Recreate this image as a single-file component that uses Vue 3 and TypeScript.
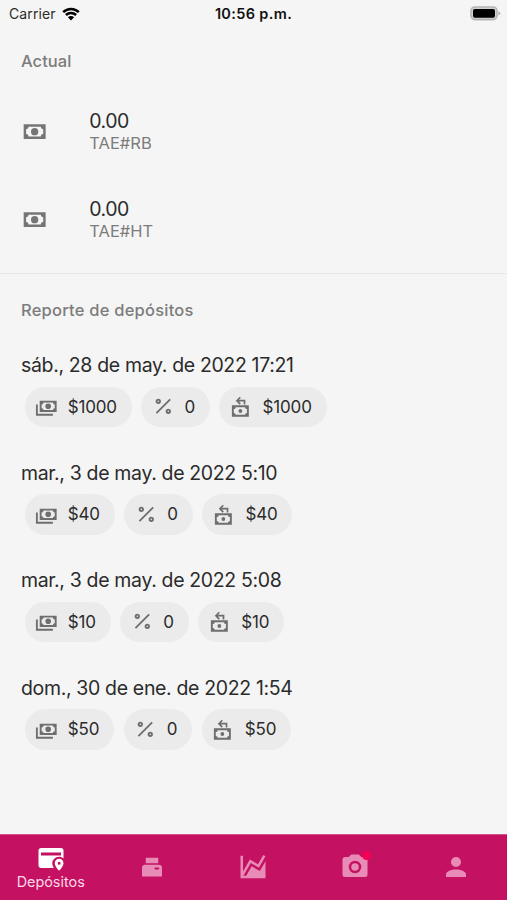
<script setup lang="ts">
interface Balance {
  amount: string
  account: string
}

interface Deposit {
  date: string
  amount: string
  commission: string
  total: string
}

const balances: Balance[] = [
  { amount: '0.00', account: 'TAE#RB' },
  { amount: '0.00', account: 'TAE#HT' },
]

const deposits: Deposit[] = [
  { date: 'sáb., 28 de may. de 2022 17:21', amount: '$1000', commission: '0', total: '$1000' },
  { date: 'mar., 3 de may. de 2022 5:10', amount: '$40', commission: '0', total: '$40' },
  { date: 'mar., 3 de may. de 2022 5:08', amount: '$10', commission: '0', total: '$10' },
  { date: 'dom., 30 de ene. de 2022 1:54', amount: '$50', commission: '0', total: '$50' },
]
</script>

<template>
  <div class="screen">
    <header class="status">
      <div class="carrier">
        <span>Carrier</span>
        <svg class="wifi" viewBox="0 0 18 14">
          <path d="M1.2 5.1A11.2 11.2 0 0 1 16.8 5.1" />
          <path d="M3.9 8A7.3 7.3 0 0 1 14.1 8" />
          <path class="dot" d="M5.9 10.2A4.4 4.4 0 0 1 12.1 10.2L9 13.4Z" />
        </svg>
      </div>
      <div class="clock">10:56 p.m.</div>
      <div class="power">
        <svg class="battery" viewBox="0 0 31 15">
          <rect class="shell" x="1" y="1" width="26" height="12.6" rx="4" />
          <rect x="3" y="3" width="22" height="8.8" rx="1.8" />
          <path class="tip" d="M28.3 5.2Q30.4 6 30.4 7.3T28.3 9.4Z" />
        </svg>
      </div>
    </header>

    <section class="current">
      <h2>Actual</h2>
      <div v-for="b in balances" :key="b.account" class="balance">
        <svg class="cash" viewBox="0 0 24 24">
          <path d="M3,6H21V18H3V6M12,9A3,3 0 0,1 15,12A3,3 0 0,1 12,15A3,3 0 0,1 9,12A3,3 0 0,1 12,9M7,8A2,2 0 0,1 5,10V14A2,2 0 0,1 7,16H17A2,2 0 0,1 19,14V10A2,2 0 0,1 17,8H7Z" />
        </svg>
        <div>
          <div class="amount">{{ b.amount }}</div>
          <div class="account">{{ b.account }}</div>
        </div>
      </div>
    </section>

    <section class="report">
      <h2>Reporte de depósitos</h2>
      <article v-for="d in deposits" :key="d.date" class="deposit">
        <div class="date">{{ d.date }}</div>
        <div class="chips">
          <div class="chip">
            <svg viewBox="0 0 24 24">
              <path d="M5,6H23V18H5V6M14,9A3,3 0 0,1 17,12A3,3 0 0,1 14,15A3,3 0 0,1 11,12A3,3 0 0,1 14,9M9,8A2,2 0 0,1 7,10V14A2,2 0 0,1 9,16H19A2,2 0 0,1 21,14V10A2,2 0 0,1 19,8H9M1,10H3V20H19V22H1V10Z" />
            </svg>
            <span>{{ d.amount }}</span>
          </div>
          <div class="chip">
            <svg class="line" viewBox="0 0 24 24">
              <path d="M4.7 19.3L19.3 4.7" />
              <circle cx="6.7" cy="6.7" r="1.8" />
              <circle cx="17.3" cy="17.3" r="1.8" />
            </svg>
            <span>{{ d.commission }}</span>
          </div>
          <div class="chip">
            <svg viewBox="0 0 24 24">
              <path class="arrow" d="M10.9 2.4L7.4 6L10.9 9.6M7.6 6H15.4V10.2" />
              <path d="M2 11H20V23H2ZM6 13A2 2 0 0 1 4 15V19A2 2 0 0 1 6 21H16A2 2 0 0 1 18 19V15A2 2 0 0 1 16 13Z" fill-rule="evenodd" />
              <circle cx="11" cy="17" r="2" />
            </svg>
            <span>{{ d.total }}</span>
          </div>
        </div>
      </article>
    </section>

    <nav class="tabs">
      <div class="tab active">
        <svg viewBox="0 0 24 24">
          <path d="M11.5,20H4C2.9,20 2,19.1 2,18V6C2,4.89 2.9,4 4,4H20A2,2 0 0,1 22,6V12.4C21,11.5 19.8,11 18.5,11C15.5,11 13,13.4 13,16.2C13,17.5 13.5,18.8 14.3,20ZM20,10V7.6H4V10H20ZM18.5,12.6C20.4,12.6 22,14.1 22,16.1C22,18.7 18.5,22 18.5,22S15,18.7 15,16.1C15,14.1 16.6,12.6 18.5,12.6M18.5,17.3A1.2,1.2 0 1,0 18.5,14.9A1.2,1.2 0 0,0 18.5,17.3Z" fill-rule="evenodd" />
        </svg>
        <span>Depósitos</span>
      </div>
      <div class="tab">
        <svg viewBox="0 0 24 24">
          <path d="M7 4.5H17V9H7ZM6.5 10.2H17.5A2.5 2.5 0 0 1 20 12.7V19.5H4V12.7A2.5 2.5 0 0 1 6.5 10.2ZM14.8 12.4A0.8 0.8 0 0 0 14.8 14H17A0.8 0.8 0 0 0 17 12.4Z" fill-rule="evenodd" />
        </svg>
      </div>
      <div class="tab">
        <svg viewBox="0 0 24 24">
          <path d="M17.45,15.18L22,7.31V21H2V3H4V15.54L9.5,6L16,9.78L20.24,2.45L21.97,3.45L16.74,12.5L10.23,8.75L4.31,19H6.57L10.96,11.44L17.45,15.18Z" />
        </svg>
      </div>
      <div class="tab">
        <div class="camera">
          <svg viewBox="0 0 24 24">
            <path d="M4,4H7L9,2H15L17,4H20A2,2 0 0,1 22,6V18A2,2 0 0,1 20,20H4A2,2 0 0,1 2,18V6A2,2 0 0,1 4,4M12,7A5,5 0 0,0 7,12A5,5 0 0,0 12,17A5,5 0 0,0 17,12A5,5 0 0,0 12,7M12,9A3,3 0 0,1 15,12A3,3 0 0,1 12,15A3,3 0 0,1 9,12A3,3 0 0,1 12,9Z" />
          </svg>
          <i class="badge"></i>
        </div>
      </div>
      <div class="tab">
        <svg viewBox="0 0 24 24">
          <path d="M12,4A4,4 0 0,1 16,8A4,4 0 0,1 12,12A4,4 0 0,1 8,8A4,4 0 0,1 12,4M12,14C16.42,14 20,15.79 20,18V20H4V18C4,15.79 7.58,14 12,14Z" />
        </svg>
      </div>
    </nav>
  </div>
</template>

<style>
body {
  background: #f5f5f5;
}
</style>

<style scoped>
.screen {
  width: 507px;
  height: 900px;
  display: flex;
  flex-direction: column;
  background: #f5f5f5;
  color: #2b2b2b;
  font-family: Inter, "Liberation Sans", sans-serif;
  white-space: nowrap;
  overflow: hidden;
}

.status {
  height: 28px;
  display: grid;
  grid-template-columns: 1fr auto 1fr;
  align-items: center;
}

.carrier {
  display: flex;
  align-items: center;
  gap: 6px;
  padding-left: 9px;
  font-size: 14px;
  letter-spacing: 0.1px;
  line-height: 28px;
}

.wifi {
  width: 18px;
  height: 14px;
  margin-bottom: 1px;
  fill: none;
  stroke: #000;
  stroke-width: 2.5;
}

.wifi .dot {
  fill: #000;
  stroke: none;
}

.clock {
  font-size: 14.5px;
  font-weight: 600;
  letter-spacing: 0.35px;
  line-height: 28px;
  color: #111;
}

.power {
  display: flex;
  justify-content: flex-end;
  padding: 0 6px 2px 0;
}

.battery {
  width: 31px;
  height: 15px;
}

.battery .shell {
  fill: #d2d2d2;
  stroke: #b5b5b5;
  stroke-width: 1.6;
}

.battery .tip {
  fill: #b5b5b5;
}

.current {
  height: 246px;
  padding-top: 20px;
  box-sizing: border-box;
  border-bottom: 1px solid #e8e8e8;
}

h2 {
  margin: 0;
  padding-left: 21px;
  font-size: 16.5px;
  line-height: 26px;
  font-weight: 500;
  letter-spacing: 0.05px;
  color: #7c7c7c;
}

.balance {
  height: 88px;
  display: flex;
  align-items: center;
  gap: 40px;
  padding-left: 20px;
}

.current .balance:nth-child(2) {
  margin-top: 14px;
}

.cash {
  width: 29.3px;
  height: 29.3px;
  fill: #757575;
}

.amount {
  font-size: 19.5px;
  line-height: 22px;
  letter-spacing: -0.5px;
}

.account {
  font-size: 16.5px;
  line-height: 22px;
  color: #7c7c7c;
}

.report {
  flex: 1;
  padding-top: 23px;
}

.report h2 {
  margin-bottom: 29px;
  letter-spacing: 0.22px;
}

.deposit {
  height: 107.5px;
}

.date {
  padding-left: 21px;
  font-size: 19.5px;
  line-height: 26px;
  letter-spacing: -0.35px;
}

.chips {
  display: flex;
  gap: 9.5px;
  padding: 8.5px 0 0 24.5px;
}

.chip {
  height: 40.5px;
  display: flex;
  align-items: center;
  gap: 9.8px;
  padding: 0 14.8px 0 10.8px;
  box-sizing: border-box;
  border-radius: 21px;
  background: #ebebeb;
  font-size: 17px;
  letter-spacing: -0.15px;
}

.chip svg {
  width: 22.6px;
  height: 22.6px;
  fill: #6e6e6e;
}

.chip .line {
  fill: none;
  stroke: #6e6e6e;
  stroke-width: 2;
}

.chip .arrow {
  fill: none;
  stroke: #6e6e6e;
  stroke-width: 1.8;
}

.tabs {
  height: 66px;
  box-sizing: border-box;
  display: grid;
  grid-template-columns: repeat(5, 1fr);
  background: #c51162;
  border-top: 1px solid #d3548c;
}

.tab {
  display: flex;
  flex-direction: column;
  align-items: center;
  justify-content: center;
  padding-bottom: 2px;
  color: #e88bb6;
}

.tab svg {
  display: block;
  width: 30px;
  height: 30px;
  fill: currentColor;
}

.tab.active {
  color: #fff;
}

.tab.active span {
  font-size: 14.4px;
  line-height: 18px;
  color: #fbd9e8;
}

.camera {
  position: relative;
}

.badge {
  position: absolute;
  top: -1px;
  right: -1.5px;
  width: 9px;
  height: 9px;
  border-radius: 50%;
  background: #f50057;
}
</style>
